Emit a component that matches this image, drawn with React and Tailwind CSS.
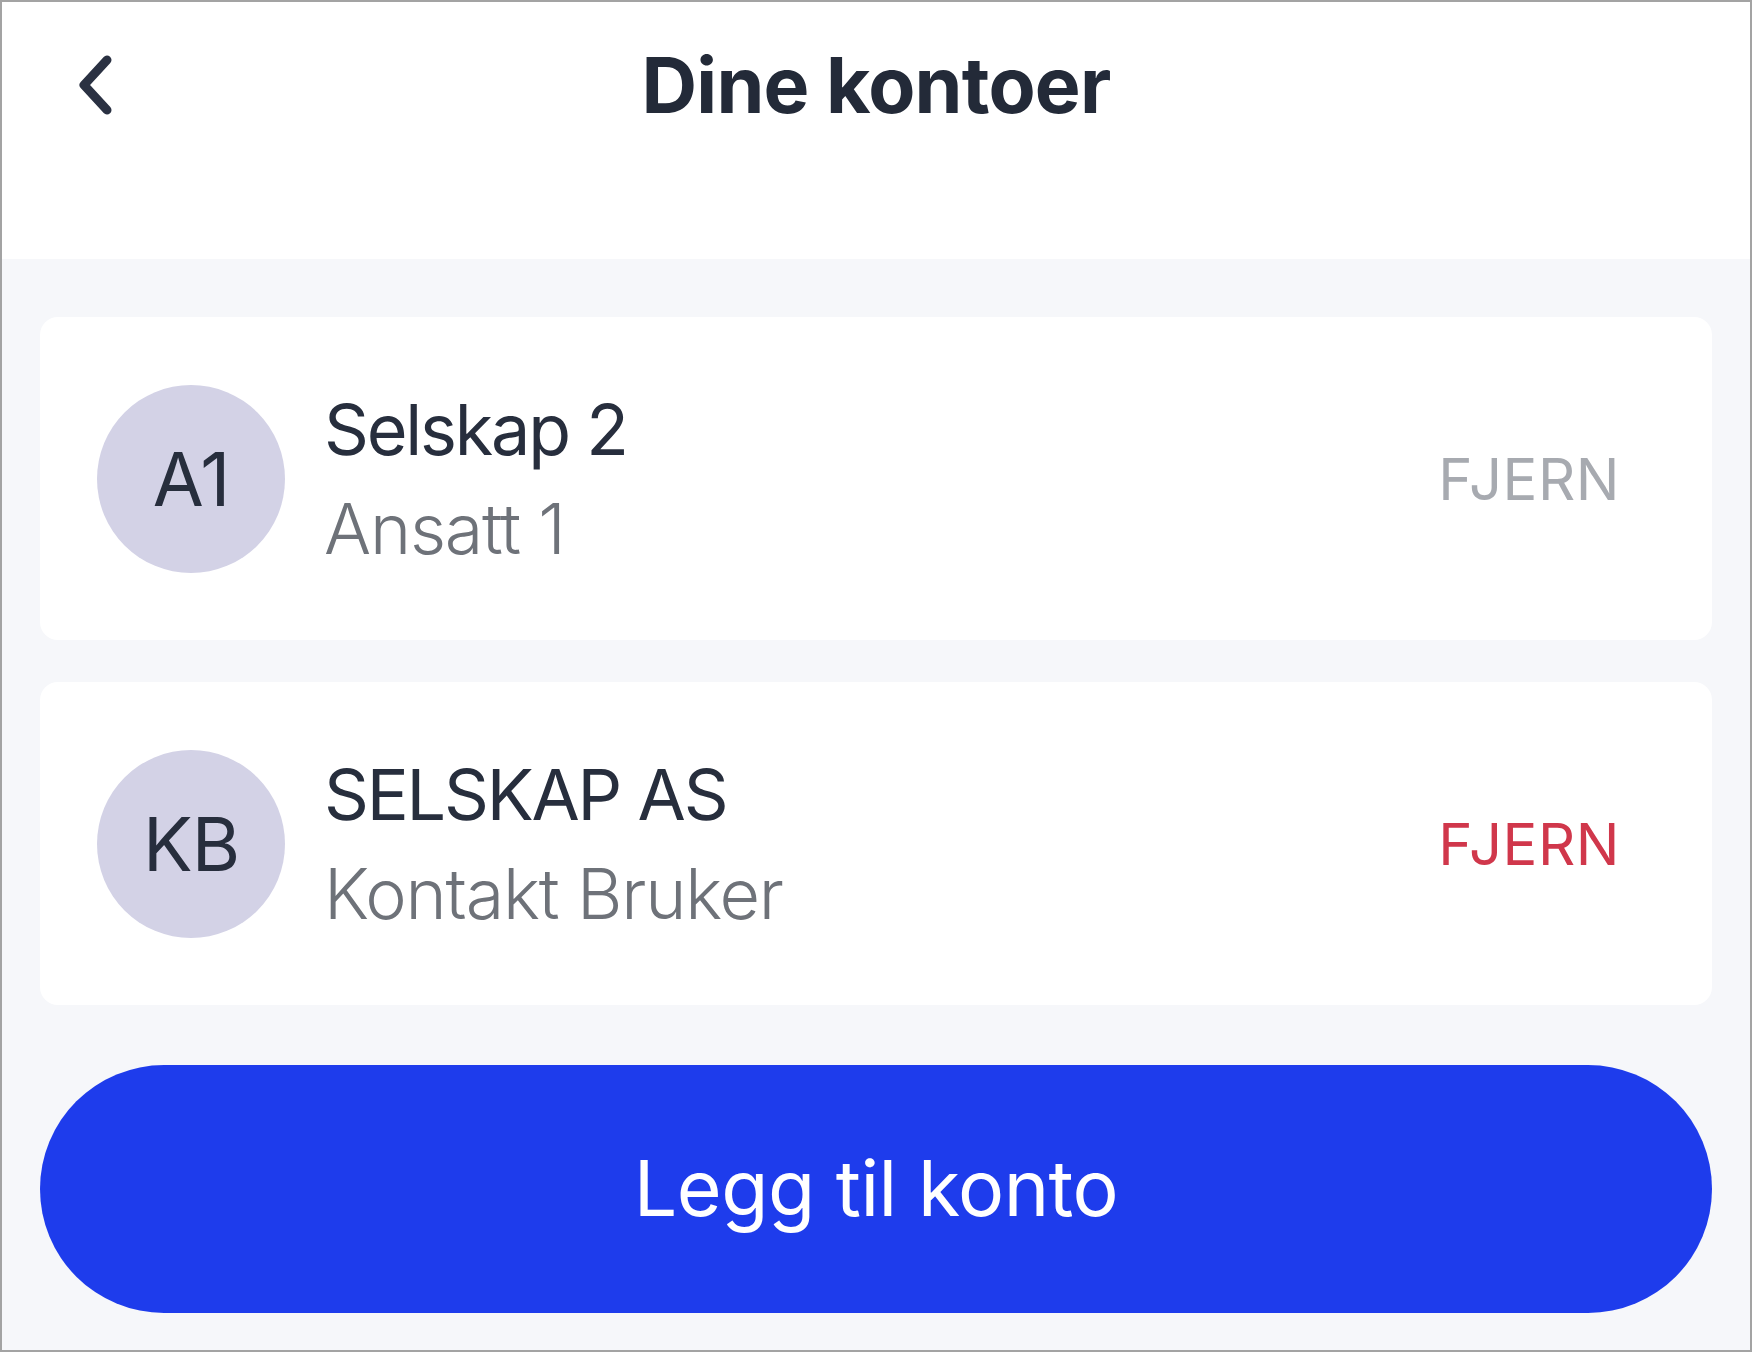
import React from "react";

const font = { fontFamily: "Inter, 'Noto Sans', sans-serif" };

function Chevron() {
  return (
    <svg width="42" height="62" viewBox="0 0 42 62" fill="none">
      <path d="M33 6 L10 31 L33 56" stroke="#2a3142" strokeWidth="9" strokeLinecap="round" strokeLinejoin="round" />
    </svg>
  );
}

function Card({ initials, name, sub, active }) {
  return (
    <div className="h-[323px] bg-white rounded-[18px] flex items-center pl-[57px] pr-[92px]">
      <div className="w-[188px] h-[188px] rounded-full bg-[#d3d2e6] flex items-center justify-center shrink-0">
        <span className="text-[74px] leading-none text-[#272e3d] tracking-[-1px]">{initials}</span>
      </div>
      <div className="ml-[39px] flex flex-col flex-1">
        <span className="text-[70px] leading-[99px] text-[#272e3d] tracking-[-2.2px]">{name}</span>
        <span className="text-[70px] leading-[99px] font-light text-[#6e7279] tracking-[-1.2px]">{sub}</span>
      </div>
      <span className={`text-[58px] leading-none tracking-[0.5px] ${active ? "text-[#d0374b]" : "text-[#a7aab0]"}`}>
        FJERN
      </span>
    </div>
  );
}

export default function App() {
  return (
    <div style={font} className="w-[1752px] h-[1352px] border-2 border-[#a3a3a3] bg-[#f6f7fa] flex flex-col overflow-hidden">
      <div className="h-[257px] bg-white shrink-0">
        <div className="h-[166px] grid grid-cols-[1fr_auto_1fr] items-center">
          <div className="pl-[72px] flex items-center">
            <Chevron />
          </div>
          <h1 className="text-[77px] font-bold text-[#232a38] tracking-[-0.8px] leading-none">Dine kontoer</h1>
          <div />
        </div>
      </div>
      <div className="flex flex-col px-[38px] pt-[58px] gap-[42px]">
        <Card initials="A1" name="Selskap 2" sub="Ansatt 1" active={false} />
        <Card initials="KB" name="SELSKAP AS" sub="Kontakt Bruker" active={true} />
        <button className="mt-[18px] h-[248px] rounded-full bg-[#1e3cec] text-white text-[77px] tracking-[-0.5px]">
          Legg til konto
        </button>
      </div>
    </div>
  );
}
